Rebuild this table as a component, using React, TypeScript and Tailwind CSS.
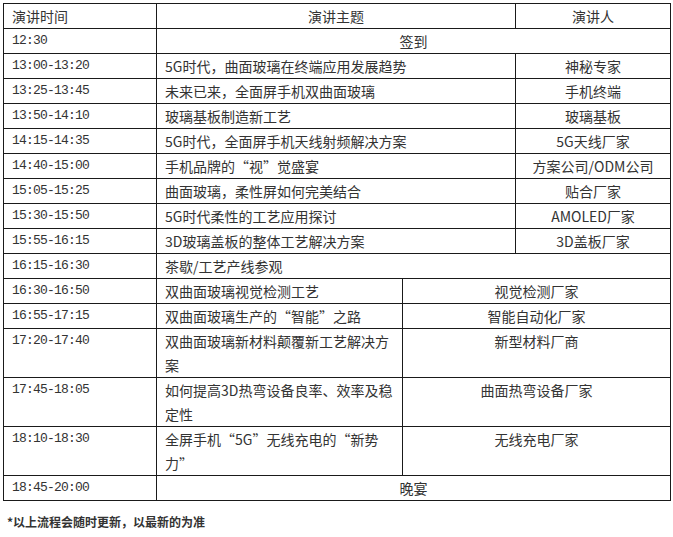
type Row = {
  time: string;
  topic: string;
  speaker?: string;
  kind: "top" | "bottom" | "full" | "fullLeft";
  tall?: boolean;
};

const rows: Row[] = [
  { time: "12:30", topic: "签到", kind: "full" },
  { time: "13:00-13:20", topic: "5G时代，曲面玻璃在终端应用发展趋势", speaker: "神秘专家", kind: "top" },
  { time: "13:25-13:45", topic: "未来已来，全面屏手机双曲面玻璃", speaker: "手机终端", kind: "top" },
  { time: "13:50-14:10", topic: "玻璃基板制造新工艺", speaker: "玻璃基板", kind: "top" },
  { time: "14:15-14:35", topic: "5G时代，全面屏手机天线射频解决方案", speaker: "5G天线厂家", kind: "top" },
  { time: "14:40-15:00", topic: "手机品牌的“视”觉盛宴", speaker: "方案公司/ODM公司", kind: "top" },
  { time: "15:05-15:25", topic: "曲面玻璃，柔性屏如何完美结合", speaker: "贴合厂家", kind: "top" },
  { time: "15:30-15:50", topic: "5G时代柔性的工艺应用探讨", speaker: "AMOLED厂家", kind: "top" },
  { time: "15:55-16:15", topic: "3D玻璃盖板的整体工艺解决方案", speaker: "3D盖板厂家", kind: "top" },
  { time: "16:15-16:30", topic: "茶歇/工艺产线参观", kind: "fullLeft" },
  { time: "16:30-16:50", topic: "双曲面玻璃视觉检测工艺", speaker: "视觉检测厂家", kind: "bottom" },
  { time: "16:55-17:15", topic: "双曲面玻璃生产的“智能”之路", speaker: "智能自动化厂家", kind: "bottom" },
  { time: "17:20-17:40", topic: "双曲面玻璃新材料颠覆新工艺解决方案", speaker: "新型材料厂商", kind: "bottom", tall: true },
  { time: "17:45-18:05", topic: "如何提高3D热弯设备良率、效率及稳定性", speaker: "曲面热弯设备厂家", kind: "bottom", tall: true },
  { time: "18:10-18:30", topic: "全屏手机“5G”无线充电的“新势力”", speaker: "无线充电厂家", kind: "bottom", tall: true },
  { time: "18:45-20:00", topic: "晚宴", kind: "full" },
];

const cell = "border border-[#1a1a1a] px-2 py-0 leading-6 align-top";
const timeFont = "font-['Liberation_Mono',monospace] text-[13px] tracking-[-0.8px]";

export default function App() {
  return (
    <div className="bg-white min-h-screen pl-[3px] pt-[3px] text-[#333] font-['Noto_Sans_CJK_SC','Noto_Sans',sans-serif] text-[14px]">
      <table className="table-fixed border-collapse w-[667px]">
        <colgroup>
          <col className="w-[153px]" />
          <col className="w-[246px]" />
          <col className="w-[113px]" />
          <col className="w-[155px]" />
        </colgroup>
        <thead>
          <tr>
            <th className={`${cell} font-normal text-left`}>演讲时间</th>
            <th colSpan={2} className={`${cell} font-normal text-center`}>
              演讲主题
            </th>
            <th className={`${cell} font-normal text-center`}>演讲人</th>
          </tr>
        </thead>
        <tbody>
          {rows.map((r) => (
            <tr key={r.time}>
              <td className={`${cell} ${timeFont} ${r.tall ? "pb-px" : ""}`}>{r.time}</td>
              {r.kind === "full" && (
                <td colSpan={3} className={`${cell} text-center`}>
                  {r.topic}
                </td>
              )}
              {r.kind === "fullLeft" && (
                <td colSpan={3} className={cell}>
                  {r.topic}
                </td>
              )}
              {r.kind === "top" && (
                <>
                  <td colSpan={2} className={cell}>
                    {r.topic}
                  </td>
                  <td className={`${cell} text-center`}>{r.speaker}</td>
                </>
              )}
              {r.kind === "bottom" && (
                <>
                  <td className={cell}>{r.topic}</td>
                  <td colSpan={2} className={`${cell} text-center`}>
                    {r.speaker}
                  </td>
                </>
              )}
            </tr>
          ))}
        </tbody>
      </table>
      <p className="mt-[12px] ml-[4px] text-[12px] leading-[18px] font-bold text-[#333] font-['Noto_Sans_CJK_SC',sans-serif]">
        *以上流程会随时更新，以最新的为准
      </p>
    </div>
  );
}
